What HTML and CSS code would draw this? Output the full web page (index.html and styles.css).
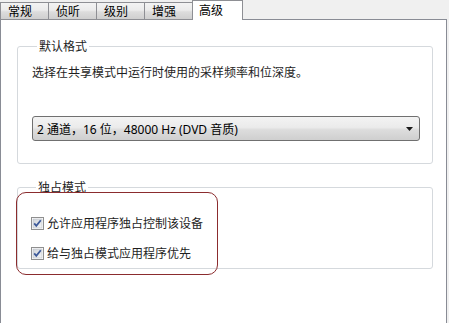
FILE: index.html
```html
<!DOCTYPE html>
<html lang="zh-CN">
<head>
<meta charset="utf-8">
<link rel="stylesheet" href="styles.css">
</head>
<body>
<div class="tabs">
  <div class="tab t1">常规</div>
  <div class="tab">侦听</div>
  <div class="tab">级别</div>
  <div class="tab">增强</div>
  <div class="tab active">高级</div>
  <div class="tab-fill"></div>
</div>
<div class="panel">
  <fieldset class="group g1">
    <legend>默认格式</legend>
    <p class="desc">选择在共享模式中运行时使用的采样频率和位深度。</p>
    <div class="select">
      <span class="select-text">2 通道，16 位，48000 Hz (DVD 音质)</span>
      <svg class="arrow" width="7" height="4" viewBox="0 0 7 4"><path d="M0 0H7L3.5 4Z" fill="#1a1a1a"/></svg>
    </div>
  </fieldset>
  <fieldset class="group g2">
    <legend>独占模式</legend>
    <div class="chk">
      <svg class="box" width="13" height="13" viewBox="0 0 13 13">
        <defs><linearGradient id="bg1" x1="0" y1="0" x2="1" y2="1"><stop offset="0" stop-color="#cfd3d9"/><stop offset="1" stop-color="#f6f6f6"/></linearGradient></defs>
        <rect x="0.5" y="0.5" width="12" height="12" fill="#fff" stroke="#8f8f8f"/>
        <rect x="2" y="2" width="9" height="9" fill="url(#bg1)" stroke="#b9bec6" stroke-width="0.6"/>
        <path d="M3.2 6.4L5.3 8.8L9.8 3.3" fill="none" stroke="#3d5a9a" stroke-width="1.8"/>
      </svg>
      <span>允许应用程序独占控制该设备</span>
    </div>
    <div class="chk">
      <svg class="box" width="13" height="13" viewBox="0 0 13 13">
        <rect x="0.5" y="0.5" width="12" height="12" fill="#fff" stroke="#8f8f8f"/>
        <rect x="2" y="2" width="9" height="9" fill="url(#bg1)" stroke="#b9bec6" stroke-width="0.6"/>
        <path d="M3.2 6.4L5.3 8.8L9.8 3.3" fill="none" stroke="#3d5a9a" stroke-width="1.8"/>
      </svg>
      <span>给与独占模式应用程序优先</span>
    </div>
    <div class="annot"></div>
  </fieldset>
</div>
</body>
</html>
```

FILE: styles.css
```css
* { box-sizing: border-box; }
html, body { margin: 0; padding: 0; }
body {
  width: 449px;
  height: 323px;
  overflow: hidden;
  background: #f0f0f0;
  font-family: "Segoe UI", "Noto Sans", "Noto Sans CJK SC", sans-serif;
  font-size: 12px;
  color: #1e1e1e;
}
.tabs {
  display: flex;
  align-items: flex-end;
  height: 20px;
}
.tab {
  width: 48px;
  height: 18px;
  border: 1px solid #8e8f94;
  border-left: none;
  background: linear-gradient(#f3f3f3, #ebebeb 45%, #dddddd 55%, #cfcfcf);
  padding-left: 7px;
  line-height: 16px;
  font-family: "Noto Sans CJK SC", sans-serif;
  font-size: 12px;
  color: #000;
}
.tab.t1 { width: 49px; border-left: 1px solid #8e8f94; }
.tab.active {
  width: 51px;
  height: 20px;
  background: #fff;
  border-left: 1px solid #8e8f94;
  border-bottom: none;
  padding-left: 6px;
  line-height: 17px;
  margin-left: -1px;
}
.tab-fill {
  flex: 1;
  height: 1px;
  background: #898c95;
  margin-right: 2px;
}
.panel {
  width: 447px;
  height: 303px;
  background: #fff;
  border: 1px solid #898c95;
  border-top: none;
  border-bottom: none;
  padding: 19px 13px 0 16px;
  font-family: "Noto Sans CJK SC", sans-serif;
}
.group {
  margin: 0;
  padding: 0 12px 0 14px;
  border: 1px solid #d5d9dd;
  border-radius: 3px;
  position: relative;
}
.group legend {
  margin-left: 5px;
  padding: 0 2px;
  font-size: 12px;
  line-height: 14px;
  color: #1e1e1e;
}
.desc {
  margin: 12px 0 0 0;
  line-height: 14px;
  font-size: 12px;
}
.select {
  margin-top: 37px;
  height: 25px;
  border: 1px solid #707070;
  border-radius: 3px;
  background: linear-gradient(#f3f3f3, #ebebeb 45%, #dddddd 55%, #cfcfcf);
  display: flex;
  align-items: center;
  justify-content: space-between;
  padding: 0 6px 0 4px;
  margin-bottom: 22px;
}
.select-text {
  font-family: "Segoe UI", "Noto Sans", "Noto Sans CJK SC", sans-serif;
  font-size: 12px;
  color: #000;
}
.arrow { display: block; margin-top: 1px; }
.g2 {
  margin-top: 16px;
  padding: 22px 0 8px 13px;
}
.chk {
  display: flex;
  align-items: center;
  gap: 3px;
  height: 14px;
  line-height: 14px;
}
.chk + .chk { margin-top: 16px; }
.box { display: block; flex: none; }
.annot {
  position: absolute;
  left: -2px;
  top: -2px;
  width: 202px;
  height: 83px;
  border: 1px solid #8b2c2e;
  border-radius: 10px;
  pointer-events: none;
}
```
